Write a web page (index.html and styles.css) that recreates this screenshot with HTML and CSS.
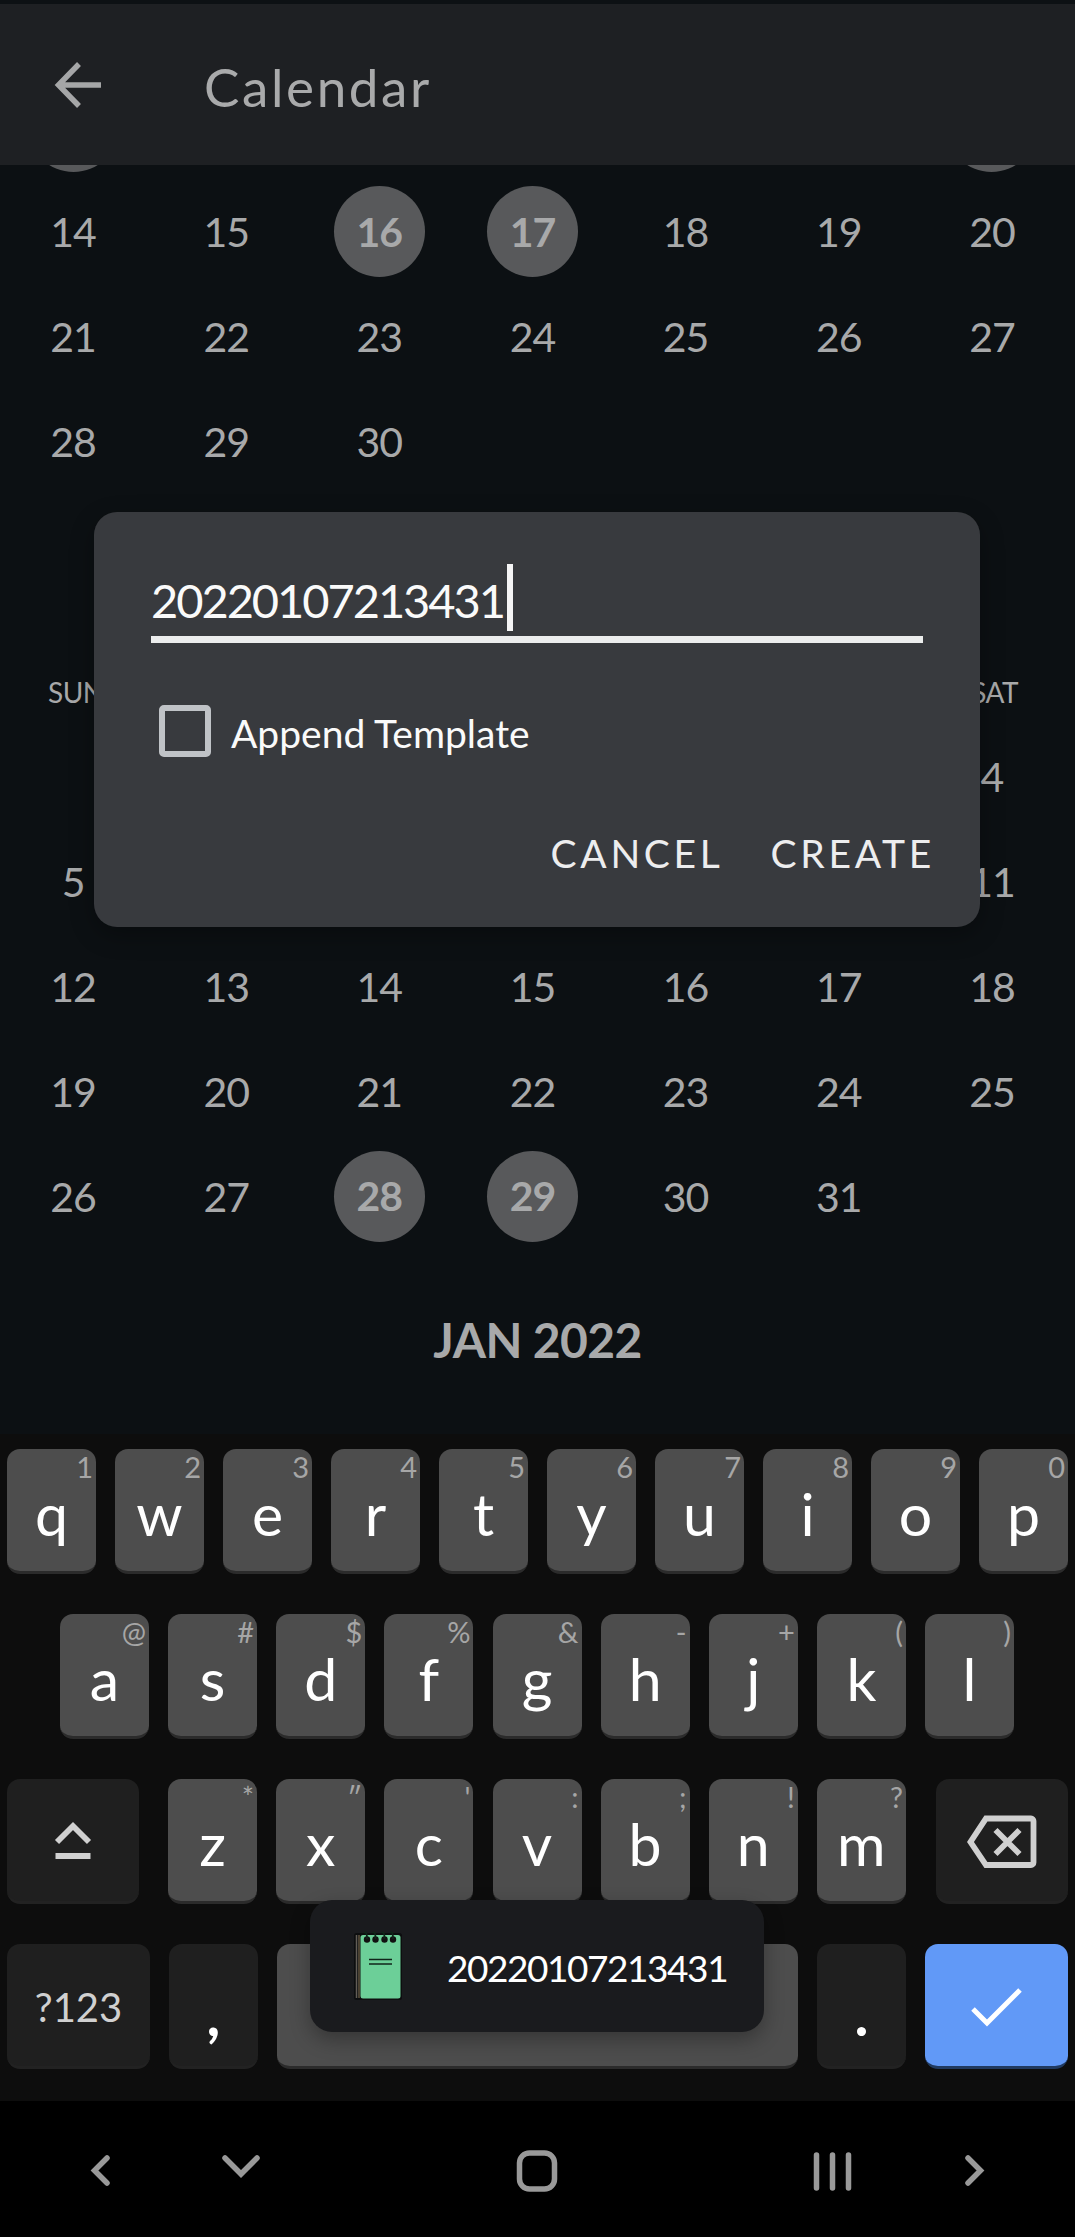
FILE: index.html
```html
<!DOCTYPE html>
<html lang="en">
<head>
<meta charset="utf-8">
<title>Calendar</title>
<link rel="stylesheet" href="styles.css">
</head>
<body>
<div class="screen">
  <header class="appbar">
    <svg class="back" width="48" height="48" viewBox="0 0 48 48"><path d="M26 3 5.500 24 26 45M5.500 24H48" /></svg>
    <h1 class="title">Calendar</h1>
  </header>
  <main class="calendar">
    <div class="week nov">
      <span class="day"><b class="dot"></b></span><span class="day"></span><span class="day"></span><span class="day"></span><span class="day"></span><span class="day"></span><span class="day"><b class="dot"></b></span>
      <span class="day">14</span><span class="day">15</span><span class="day"><b class="dot">16</b></span><span class="day"><b class="dot">17</b></span><span class="day">18</span><span class="day">19</span><span class="day">20</span>
      <span class="day">21</span><span class="day">22</span><span class="day">23</span><span class="day">24</span><span class="day">25</span><span class="day">26</span><span class="day">27</span>
      <span class="day">28</span><span class="day">29</span><span class="day">30</span>
    </div>
    <div class="names"><span>SUN</span><span>SAT</span></div>
    <div class="week dec">
      <span class="day"></span><span class="day"></span><span class="day"></span><span class="day"></span><span class="day"></span><span class="day"></span><span class="day">4</span>
      <span class="day">5</span><span class="day"></span><span class="day"></span><span class="day"></span><span class="day"></span><span class="day"></span><span class="day">11</span>
      <span class="day">12</span><span class="day">13</span><span class="day">14</span><span class="day">15</span><span class="day">16</span><span class="day">17</span><span class="day">18</span>
      <span class="day">19</span><span class="day">20</span><span class="day">21</span><span class="day">22</span><span class="day">23</span><span class="day">24</span><span class="day">25</span>
      <span class="day">26</span><span class="day">27</span><span class="day"><b class="dot">28</b></span><span class="day"><b class="dot">29</b></span><span class="day">30</span><span class="day">31</span>
    </div>
    <h2 class="month">JAN 2022</h2>
  </main>
  <section class="keyboard">
    <div class="keys">
      <span class="key"><i>1</i>q</span><span class="key"><i>2</i>w</span><span class="key"><i>3</i>e</span><span class="key"><i>4</i>r</span><span class="key"><i>5</i>t</span><span class="key"><i>6</i>y</span><span class="key"><i>7</i>u</span><span class="key"><i>8</i>i</span><span class="key"><i>9</i>o</span><span class="key"><i>0</i>p</span>
    </div>
    <div class="keys inset">
      <span class="key"><i>@</i>a</span><span class="key"><i>#</i>s</span><span class="key"><i>$</i>d</span><span class="key"><i>%</i>f</span><span class="key"><i>&amp;</i>g</span><span class="key"><i>-</i>h</span><span class="key"><i>+</i>j</span><span class="key"><i>(</i>k</span><span class="key"><i>)</i>l</span>
    </div>
    <div class="keys">
      <span class="key dark shift"><svg width="132" height="125" viewBox="0 0 132 125"><path d="M50 63 66 47l16 16M48.500 77h35"/></svg></span>
      <span class="key"><i>*</i>z</span><span class="key"><i>″</i>x</span><span class="key"><i>'</i>c</span><span class="key"><i>:</i>v</span><span class="key"><i>;</i>b</span><span class="key"><i>!</i>n</span><span class="key"><i>?</i>m</span>
      <span class="key dark erase"><svg width="132" height="125" viewBox="0 0 132 125"><path d="M50 39.500h45a2.500 2.500 0 0 1 2.500 2.500v41.500a2.500 2.500 0 0 1-2.500 2.500H50L34.500 63ZM59.500 51l24 24M83.500 51l-24 24"/></svg></span>
    </div>
    <div class="keys">
      <span class="key dark wide sym">?123</span><span class="key dark punct">,</span><span class="key space"></span><span class="key dark punct">.</span>
      <span class="key enter wide"><svg width="143" height="125" viewBox="0 0 143 125"><path d="m48 65 14 14 33-33"/></svg></span>
    </div>
  </section>
  <nav class="navbar">
    <svg width="1075" height="136" viewBox="0 0 1075 136"><path d="M107 57 94.500 69.500 107 82M225 57l16 16 16-16M968 57l12.500 12.500L968 82M816.500 54v33M832.500 54v33M848.500 54v33"/><rect x="519.500" y="52" width="35" height="36" rx="10"/></svg>
  </nav>
  <section class="dialog">
    <div class="field"><span>20220107213431</span><span class="caret"></span></div>
    <div class="option"><span class="box"></span><span>Append Template</span></div>
    <div class="actions"><span>CANCEL</span><span>CREATE</span></div>
  </section>
  <aside class="toast">
    <svg width="50" height="70" viewBox="0 0 50 70"><rect x="0" y="2" width="48" height="67" rx="2.500" fill="#0d0e0f"/><path d="M2.500 4v63" stroke="#625d57" stroke-width="1.500"/><path d="M5 4v63" stroke="#8a7756" stroke-width="1"/><rect x="6.500" y="4" width="40" height="63.500" rx="2.500" fill="#6ccf98"/><g fill="#111"><circle cx="13" cy="8.500" r="3.200"/><circle cx="21.500" cy="8.500" r="3.200"/><circle cx="30.500" cy="8.500" r="3.200"/><circle cx="39" cy="8.500" r="3.200"/></g><path d="M10 2q3-3 3 6M18.500 2q3-3 3 6M27.500 2q3-3 3 6M36 2q3-3 3 6M15 28.500h23M15 33h23" fill="none" stroke="#10251a" stroke-width="1.700"/></svg>
    <span>20220107213431</span>
  </aside>
</div>
</body>
</html>
```
FILE: styles.css
```css
* { box-sizing: border-box; }
body { margin: 0; background: #0c1013; font-family: Lato, "Open Sans", sans-serif; }
.screen { position: relative; width: 1075px; height: 2237px; overflow: hidden; display: flex; flex-direction: column; }
svg { display: block; fill: none; flex: none; }
.appbar { height: 165px; border-top: 4px solid #0d1114; background: #1e2023; display: flex; align-items: center; padding-left: 53px; position: relative; z-index: 1; flex: none; }
.back { stroke: #a5a6a7; stroke-width: 5.500; }
.title { margin: 5px 0 0 103px; font-size: 53px; line-height: 60px; font-weight: 400; letter-spacing: 2.600px; color: #a9aaab; }
.calendar { height: 1269px; flex: none; color: #a8a9aa; overflow: hidden; }
.week { display: grid; grid-template-columns: repeat(7, 153.150px); grid-auto-rows: 104.900px; margin-left: -3.500px; }
.nov { margin-top: -91px; }
.day { display: flex; align-items: center; justify-content: center; font-size: 41px; letter-spacing: -1px; }
.dec .day { padding-bottom: 3px; }
.dot { width: 91px; height: 91px; border-radius: 50%; background: #58595b; display: flex; align-items: center; justify-content: center; font-weight: 700; flex: none; }
.dec .dot { padding-bottom: 2px; }
.names { display: flex; justify-content: space-between; width: 970px; height: 36px; margin: 180px 0 16px 48px; line-height: 36px; font-size: 28px; letter-spacing: -.5px; }
.month { margin: 60px 0 0; text-align: center; font-size: 48px; line-height: 60px; font-weight: 700; letter-spacing: -.6px; }
.keyboard { height: 667px; flex: none; background: #0d0d0d; padding: 15px 7px 0; display: flex; flex-direction: column; gap: 40px; }
.keys { display: flex; justify-content: space-between; height: 125px; }
.inset { padding: 0 54px 0 53px; }
.key { position: relative; width: 89px; height: 125px; border-radius: 13px; background: #4d4d4d; border-bottom: 3px solid #2b2b2b; color: #fff; text-align: center; font-size: 59px; line-height: 130px; }
.key i { position: absolute; right: 3px; top: 2px; font-size: 29px; line-height: 32px; font-style: normal; color: #a6a6a6; }
.dark { background: #1f1f1f; border-color: #222; }
.shift, .erase { width: 132px; }
.shift { margin-right: 10px; }
.erase { margin-left: 11px; }
.key svg { stroke: #d0d0d0; stroke-width: 5.800; }
.wide { width: 143px; }
.space { width: 521px; }
.sym { font-size: 40px; color: #d0d0d0; line-height: 126px; }
.punct { line-height: 139px; font-weight: 700; }
.key.enter { background: #6199f7; border-color: #203a60; }
.key.enter svg { stroke: #fff; stroke-width: 5; }
.navbar { height: 136px; background: #000; flex: none; }
.navbar svg { stroke: #999; stroke-width: 5.500; stroke-linecap: round; }
.dialog { position: absolute; left: 94px; top: 512px; width: 886px; height: 415px; border-radius: 23px; background: #383a3e; color: #fafafa; padding: 52px 57px 0; box-shadow: 0 8px 24px rgba(0,0,0,.3); }
.field { height: 79px; border-bottom: 7px solid #eceded; display: flex; font-size: 47px; line-height: 72px; letter-spacing: -2.050px; }
.caret { width: 6px; height: 67px; background: #f5f5f5; margin-left: 3px; }
.option { display: flex; align-items: center; height: 52px; margin: 62px 0 0 8px; gap: 20px; font-size: 39px; }
.option span:last-child { padding-top: 3px; }
.box { width: 52px; height: 52px; border: 6px solid #c0c3c7; border-radius: 5px; }
.actions { display: flex; justify-content: flex-end; gap: 47px; margin: 71px -12px 0 0; font-size: 39px; line-height: 50px; letter-spacing: 3.700px; color: #ededee; }
.toast { position: absolute; left: 310px; top: 1900px; width: 454px; height: 132px; border-radius: 22px; background: #1a1b1e; color: #fff; display: flex; align-items: center; padding-left: 44px; gap: 43px; font-size: 37px; letter-spacing: -1.450px; box-shadow: 0 8px 20px rgba(0,0,0,.3); }
.toast span { padding-top: 3px; }
```
